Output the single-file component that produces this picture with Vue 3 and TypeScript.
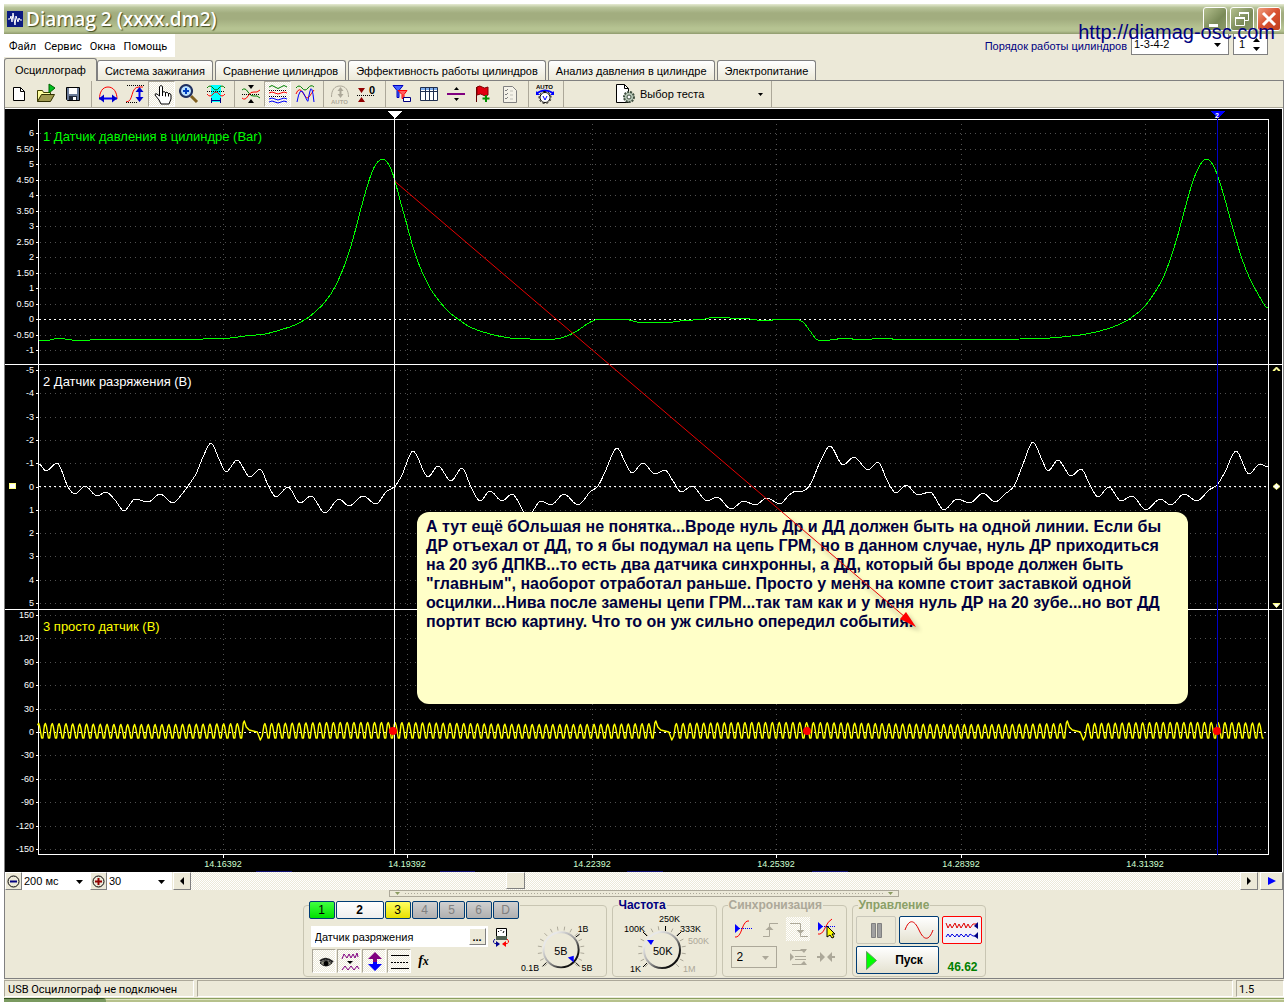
<script setup lang="ts">
import { ref } from 'vue'

interface Shape {
  d?: string
  f?: string
  s?: string
  w?: number
  dash?: string
  t?: string
  x?: number
  y?: number
  size?: number
}
interface Tool {
  label: string
  pressed?: boolean
  shapes: Shape[]
}
type Point = [number, number]

const RED = '#ff0000'
const BLUE = '#0000ff'
const GREEN = '#008000'
const MUTED = '#aca899'

const menu = ['Файл', 'Сервис', 'Окна', 'Помощь']
const tabs = [
  'Осциллограф',
  'Система зажигания',
  'Сравнение цилиндров',
  'Эффективность работы цилиндров',
  'Анализ давления в цилиндре',
  'Электропитание',
]
const activeTab = ref(0)

const toolGroups: Tool[][] = [
  [
    { label: 'Новый', shapes: [{ d: 'M6.5 5.5h7l4 4v9h-11z', f: '#fff', s: '#000' }, { d: 'M13.5 5.5v4h4', s: '#000' }] },
    {
      label: 'Открыть',
      shapes: [
        { d: 'M3.5 19.5v-11h5l1 2h7v3', f: '#ffffa0', s: '#404000' },
        { d: 'M3.5 19.5l4-7h13l-4 7z', f: '#a09a50', s: '#303000' },
        { d: 'M15 2v9l6-5z', f: '#00c020', s: '#006000' },
      ],
    },
    {
      label: 'Сохранить',
      shapes: [
        { d: 'M5.5 5.5h13v13h-12l-1-1z', f: '#6a7a98', s: '#000' },
        { d: 'M8 6h8v6H8z', f: '#fff' },
        { d: 'M8 14h8v4H8z', f: '#20283a' },
        { d: 'M12 15h3v3h-3z', f: '#fff' },
      ],
    },
  ],
  [
    {
      label: 'Ширина',
      shapes: [
        { d: 'M3.5 17c0-7 3-12 8.500-12s9 5 9 12', s: RED },
        { d: 'M3 16.500h18', s: BLUE, w: 2 },
        { d: 'M3 16.500l5-4v8z M21 16.500l-5-4v8z', f: '#0000d0' },
      ],
    },
    {
      label: 'Высота',
      shapes: [
        { d: 'M3 20c8 0 4-15 13-15h4', s: RED },
        { d: 'M4 3.500h17', s: '#000', dash: '1 1' },
        { d: 'M3 20.500h12', s: '#000', dash: '1 1' },
        { d: 'M16.500 8v10', s: BLUE, w: 2 },
        { d: 'M16.500 5l-4 5h8z M16.500 20l-4-5h8z', f: '#0000d0' },
      ],
    },
    {
      label: 'Рука',
      pressed: true,
      shapes: [
        { d: 'M9.500 14V4.500q1.500-2 3 0v6q1.500-2 3 0q1.500-1 3 1q2-.5 2.500 1.500v4l-2 5h-8l-2-4l-4-5q0-2 2-1z', f: '#fff', s: '#000' },
        { d: 'M12.500 10v4M15.500 10.500v4M18.500 11.500v3', s: '#000' },
      ],
    },
    {
      label: 'Масштаб',
      shapes: [
        { d: 'M14 14l6 6', s: '#806020', w: 3 },
        { d: 'M9 3a6 6 0 1 0 .1 0z', f: '#b8e0ff', s: '#203060', w: 2 },
        { d: 'M6 9h6M9 6v6', s: '#0040c0', w: 2 },
      ],
    },
    {
      label: 'Участок',
      shapes: [
        { d: 'M7 3h10v17H7z', f: '#00ffff' },
        { d: 'M3 6q3-4 6 0t6 0t6 0', s: GREEN },
        { d: 'M3 9.500h18', s: '#000', dash: '1 1' },
        { d: 'M3 12q3 4 6 0t6 0t6 0', s: RED },
        { d: 'M7.500 16v5M16.500 16v5M8 18.500h8', s: '#000080' },
      ],
    },
  ],
  [
    {
      label: 'Совместить',
      shapes: [
        { d: 'M9 3h6l-3 4z M9 21h6l-3-4z', f: '#000' },
        { d: 'M3 8q3-3 6 2t6 4t6 2', s: GREEN },
        { d: 'M3 16q3 3 6-2t6-4t6-2', s: RED },
        { d: 'M3 12.500h18', s: '#000', dash: '1 1' },
      ],
    },
    {
      label: 'Раздельно',
      pressed: true,
      shapes: [
        { d: 'M3 5q3-3 6 0t6 0t6 0', s: GREEN },
        { d: 'M3 8.500h18M3 14.500h18', s: '#000', dash: '1 1' },
        { d: 'M3 11q3-2 6 0t6 0t6 0', s: RED },
        { d: 'M3 17q3-2 6 0t6 0t6 0M3 20q3-2 6 0t6 0t6 0', s: BLUE },
      ],
    },
    {
      label: 'Наложить',
      shapes: [
        { d: 'M3 6q3-4 6 0t6 0t6-1', s: GREEN },
        { d: 'M3 12q3-8 7-1t6 4t5-7', s: RED },
        { d: 'M4 20q3-17 7-8t4 7t2-10t4 11', s: BLUE },
      ],
    },
  ],
  [
    {
      label: 'Автомасштаб',
      shapes: [
        { d: 'M3.500 15c0-7 3-11 8.500-11s8.500 4 8.500 11', s: MUTED },
        { d: 'M12.500 7v7', s: MUTED, w: 2 },
        { d: 'M12.500 5l-3 4h6z M12.500 16l-3-4h6z', f: MUTED },
        { t: 'AUTO', x: 3, y: 22, size: 6, f: MUTED },
      ],
    },
    {
      label: 'Ноль',
      shapes: [
        { d: 'M3 6h7l-3.500 5z M3 20h7l-3.500-5z', f: '#900000' },
        { d: 'M2 13.500h18', s: '#000', dash: '1 1' },
        { t: '0', x: 14, y: 12, size: 11, f: '#000' },
      ],
    },
  ],
  [
    {
      label: 'Фильтр',
      shapes: [
        { d: 'M3 3.500h10l-4 5v7h-2v-7z', f: '#4060ff', s: '#0000c0' },
        { d: 'M8 8.500h9l-3 4v4h-2v-4z', f: '#ff6060', s: RED },
        { d: 'M13.500 15.500h7v4h-7z', f: '#fff', s: '#000080' },
      ],
    },
    {
      label: 'Таблица',
      shapes: [
        { d: 'M3.500 5.500h17v13h-17z', f: '#fff', s: '#203050' },
        { d: 'M4 6h16v2H4z', f: '#80b0f0' },
        { d: 'M3 9.500h18M8.500 6v13M12.500 6v13M16.500 6v13', s: '#203050' },
      ],
    },
    {
      label: 'Разделитель',
      shapes: [
        { d: 'M3 12h18', s: '#800080', w: 2 },
        { d: 'M10 8h5l-2.500-3z M10 16h5l-2.500 3z', f: '#000' },
      ],
    },
    {
      label: 'Добавить флаг',
      shapes: [
        { d: 'M5.500 5v15', s: '#600000' },
        { d: 'M6 5q3-2 5 0t6 0v8q-3 2-5 0t-6 0z', f: '#e00010', s: '#800000' },
        { d: 'M15 13v7M11.500 16.500h7', s: '#009000', w: 2 },
      ],
    },
    {
      label: 'Проверки',
      shapes: [
        { d: 'M5.500 4.500h9l4 4v12h-13z', f: '#f4f2e8', s: '#808080' },
        { d: 'M7 8l1 1l2-2M7 12l1 1l2-2M7 16l1 1l2-2', s: '#808080' },
        { d: 'M12 9h3M12 13h3M12 17h3', s: '#c0c0b8' },
      ],
    },
  ],
  [
    {
      label: 'Авто напряжение',
      shapes: [
        { t: 'AUTO', x: 3, y: 7, size: 6, f: '#000' },
        { d: 'M4 11q8-5 16 0', s: BLUE, w: 2 },
        { d: 'M3 9v4h4zM21 9v4h-4z', f: BLUE },
        { d: 'M12 10.500a5 5 0 1 0 .1 0z', f: '#fff', s: '#000', w: 1 },
        { d: 'M12 9.500a6 6 0 1 0 .1 0z', s: '#000', dash: '2 2' },
        { d: 'M10 14l2 4l2-4', s: BLUE },
      ],
    },
  ],
]

const channels = [
  { n: '1', c: 'green' },
  { n: '2', c: 'selected' },
  { n: '3', c: 'yellow' },
  { n: '4', c: 'off' },
  { n: '5', c: 'off' },
  { n: '6', c: 'off' },
  { n: 'D', c: 'off' },
]

const viewTools: Tool[] = [
  {
    label: 'Показать канал',
    pressed: true,
    shapes: [
      { d: 'M7 13q5-5 12 0q-6 6-12 0z', f: '#909080', s: '#202020' },
      { d: 'M13 11a2.500 2.500 0 1 0 .1 0z', f: '#000' },
      { d: 'M7 11q6-5 13 1', s: '#202020', w: 2 },
    ],
  },
  {
    label: 'Сжать сигнал',
    pressed: true,
    shapes: [
      { d: 'M4 9l2-5l3 4l2-4l2 4l2-4l2 4l2-5l1 4', s: '#800080' },
      { d: 'M9 11h6l-3 3z', f: '#000' },
      { d: 'M4 20l3-4l3 4l3-4l3 4l3-4l2 3', s: '#800080' },
    ],
  },
  {
    label: 'Инвертировать',
    pressed: true,
    shapes: [
      { d: 'M12 2l7 7h-5v3h-4V9H5z', f: '#800080' },
      { d: 'M12 21l7-7h-5v-2h-4v2H5z', f: BLUE },
    ],
  },
  { label: 'Линии', pressed: true, shapes: [{ d: 'M3 5.500h18M3 18.500h18', s: '#000' }, { d: 'M3 12.500h18', s: '#000', dash: '2 1' }] },
]

const syncTools: Tool[] = [
  {
    label: 'Синхронизация по уровню',
    shapes: [
      { d: 'M5 20q4 1 7-8t7-8', s: RED },
      { d: 'M5 11.500h17', s: BLUE, dash: '1 1' },
      { d: 'M5 7v9l5-4.500z', f: BLUE },
    ],
  },
  { label: 'По фронту', shapes: [{ d: 'M5 19.500h6.500v-13H20', s: MUTED }, { d: 'M11.500 9l-4 4h8z', f: MUTED }] },
  { label: 'По спаду', pressed: true, shapes: [{ d: 'M4 6.500h10.500v13H22', s: MUTED }, { d: 'M14.500 17l-4-4h8z', f: MUTED }] },
  {
    label: 'Выбор уровня',
    shapes: [
      { d: 'M4 17q4 1 7-6t7-9', s: RED },
      { d: 'M4 9.500h18', s: BLUE, dash: '1 1' },
      { d: 'M4 5v9l5-4.500z', f: BLUE },
      { d: 'M13 9v11l3-2l2 3l2-1l-2-3h3z', f: '#ffff00', s: '#000' },
    ],
  },
]
const syncExtra: Tool[] = [
  { label: 'Уровни', shapes: [{ d: 'M4 8v8l4-4zM14 4h7l-3 4zM14 20h7l-3-4z', f: MUTED }, { d: 'M6 5.500h14M9 11.500h11M9 14.500h11M6 19.500h14', s: MUTED }] },
  { label: 'Сблизить', shapes: [{ d: 'M3 12h7M14 12h7', s: MUTED, w: 2 }, { d: 'M6 7v10l5-5zM18 7v10l-5-5z', f: MUTED }] },
]

/* Chart geometry */
const pressureTicks = ['6', '5.50', '5', '4.50', '4', '3.50', '3', '2.50', '2', '1.50', '1', '0.50', '0', '-0.50', '-1'].map(
  (t, i) => ({ t, y: Math.round(133 + i * 15.5) }),
)
const vacuumTicks = ['-5', '-4', '-3', '-2', '-1', '0', '1', '2', '3', '4', '5'].map((t, i) => ({
  t,
  y: Math.round(370 + i * 23.3),
}))
const crankTicks = ['150', '120', '90', '60', '30', '0', '-30', '-60', '-90', '-120', '-150'].map((t, i) => ({
  t,
  y: Math.round(615 + i * 23.4),
}))
const ticks = [...pressureTicks, ...vacuumTicks, ...crankTicks]
const timeTicks = ['14.16392', '14.19392', '14.22392', '14.25392', '14.28392', '14.31392'].map((t, i) => ({
  t,
  x: Math.round(223 + i * 184.4),
}))

const pressure: Point[] = [
  [39, 340], [50, 340], [58, 338], [72, 340], [90, 340], [120, 339], [143, 340], [160, 339], [203, 339], [230, 338], [245, 336],
  [265, 334], [280, 330], [295, 325], [306, 319], [315, 312], [325, 302], [335, 287], [345, 264], [353, 239], [360, 212],
  [367, 187], [372, 172], [376, 164], [380, 160], [383, 159], [387, 162], [391, 169], [395, 181], [400, 200], [407, 225],
  [413, 247], [420, 267], [430, 288], [440, 302], [450, 313], [458, 319], [470, 327], [490, 334], [510, 338], [530, 339],
  [555, 339], [567, 336], [577, 331], [587, 324], [595, 320], [602, 319], [625, 319], [637, 322], [652, 322], [665, 323],
  [680, 321], [705, 319], [714, 317], [730, 318], [750, 319], [765, 321], [780, 319], [795, 319], [803, 322], [810, 331],
  [818, 340], [830, 340], [845, 338], [860, 340], [885, 338], [900, 340], [1020, 339], [1050, 338], [1080, 335], [1100, 331],
  [1118, 325], [1131, 318], [1145, 306], [1155, 292], [1163, 278], [1170, 260], [1177, 238], [1183, 216], [1189, 194],
  [1194, 178], [1199, 167], [1203, 161], [1207, 159], [1211, 162], [1215, 169], [1218, 177], [1224, 196], [1230, 218],
  [1236, 239], [1242, 259], [1250, 279], [1258, 294], [1268, 308],
]
const vacuum: Point[] = [
  [39, 464], [46, 471], [57, 463], [68, 487], [75, 494], [85, 486], [97, 496], [106, 492], [115, 500], [124, 511], [135, 499],
  [148, 502], [160, 494], [173, 503], [182, 494], [188, 486], [196, 474], [203, 457], [211, 443], [219, 459], [226, 472],
  [237, 460], [250, 477], [260, 469], [268, 485], [276, 497], [288, 487], [300, 503], [311, 496], [325, 513], [339, 499],
  [349, 506], [363, 496], [376, 504], [386, 492], [395, 486], [402, 475], [413, 451], [428, 477], [438, 466], [451, 481],
  [462, 468], [471, 487], [480, 501], [490, 491], [502, 501], [512, 494], [528, 516], [541, 501], [551, 505], [564, 494],
  [578, 505], [590, 492], [598, 486], [605, 472], [617, 448], [626, 464], [632, 473], [643, 463], [655, 474], [665, 470],
  [673, 481], [681, 492], [692, 486], [707, 501], [717, 497], [731, 509], [744, 501], [755, 505], [767, 498], [780, 504],
  [789, 495], [797, 491], [803, 491], [811, 483], [820, 462], [830, 446], [843, 465], [854, 457], [868, 470], [878, 462],
  [887, 480], [896, 493], [906, 485], [918, 495], [930, 492], [944, 510], [957, 499], [970, 503], [983, 493], [995, 502],
  [1005, 494], [1014, 486], [1022, 467], [1033, 442], [1042, 460], [1048, 471], [1058, 460], [1071, 476], [1081, 469],
  [1090, 485], [1098, 497], [1109, 487], [1121, 501], [1132, 496], [1146, 510], [1160, 499], [1171, 505], [1184, 494],
  [1197, 501], [1209, 490], [1217, 485], [1225, 472], [1236, 451], [1249, 474], [1260, 464], [1268, 467],
]

function smooth(points: Point[]): string {
  const slope = (p: Point, q: Point, r: Point): number =>
    (q[1] - p[1]) * (r[1] - q[1]) <= 0 ? 0 : (r[1] - p[1]) / (r[0] - p[0])
  let d = `M${points[0][0]} ${points[0][1]}`
  for (let i = 0; i < points.length - 1; i++) {
    const a = points[Math.max(i - 1, 0)]
    const b = points[i]
    const c = points[i + 1]
    const e = points[Math.min(i + 2, points.length - 1)]
    const t = (c[0] - b[0]) / 3
    d += `C${b[0] + t} ${b[1] + slope(a, b, c) * t} ${c[0] - t} ${c[1] - slope(b, c, e) * t} ${c[0]} ${c[1]}`
  }
  return d
}

/* Toothed wheel signal: 58 teeth, then a gap of two */
function crankPath(): string {
  const pitch = 411.5 / 60
  const out: string[] = []
  for (let rev = 0; rev < 4; rev++) {
    const gap = 244.3 + rev * 411.5
    for (let k = 57; k >= 0; k--) {
      const x = gap - k * pitch
      if (x < 38 || x > 1265) continue
      const top = k === 0 ? 721 : 723.5 + Math.sin(k / 9)
      out.push(`${(x - 1).toFixed(1)} ${top + 2}`, `${x.toFixed(1)} ${top}`)
      if (k === 0) {
        out.push(`${x + 2} 727`, `${x + 5} 730`, `${x + 13} 732`, `${x + 16} 740`, `${x + 18} 736`)
      } else {
        out.push(`${(x + 1).toFixed(1)} ${top + 3}`, `${(x + 3).toFixed(1)} 738`, `${(x + 4.3).toFixed(1)} 738`)
      }
    }
  }
  return 'M' + out.join('L')
}

const note = [
  'А тут ещё бОльшая не понятка...Вроде нуль Др и ДД должен быть на одной линии. Если бы',
  'ДР отъехал от ДД, то я бы подумал на цепь ГРМ, но в данном случае, нуль ДР приходиться',
  'на 20 зуб ДПКВ...то есть два датчика синхронны, а ДД, который бы вроде должен быть',
  '"главным", наоборот отработал раньше. Просто у меня на компе стоит заставкой одной',
  'осцилки...Нива после замены цепи ГРМ...так там как и у меня нуль ДР на 20 зубе...но вот ДД',
  'портит всю картину. Что то он уж сильно опередил события.',
]

function knobTicks(cx: number, cy: number): string {
  let d = ''
  for (let a = -225; a <= 45; a += 18) {
    const r = (a * Math.PI) / 180
    d += `M${cx + 20 * Math.cos(r)} ${cy + 20 * Math.sin(r)}L${cx + 24 * Math.cos(r)} ${cy + 24 * Math.sin(r)}`
  }
  return d
}
</script>

<template>
  <div class="window">
    <header class="titlebar">
      <svg class="logo" viewBox="0 0 16 16" aria-hidden="true">
        <rect width="16" height="16" fill="#0a1a80" />
        <path d="M1 8h2l1-3l1 6l1-9l2 12l1-9l2 6l1-4l1 2h2" fill="none" stroke="#fff" />
      </svg>
      <h1>Diamag 2 (xxxx.dm2)</h1>
      <div class="win-buttons">
        <button type="button" aria-label="Свернуть"><svg viewBox="0 0 22 22"><path d="M5 16h9v3H5z" fill="#fff" /></svg></button>
        <button type="button" aria-label="Восстановить">
          <svg viewBox="0 0 22 22"><path d="M8.500 8V4.500h9v8H14M4.500 10.500h9v7h-9z" fill="none" stroke="#fff" /><path d="M8 4h10v2H8zM4 9h10v2H4z" fill="#fff" /></svg>
        </button>
        <button type="button" class="close" aria-label="Закрыть">
          <svg viewBox="0 0 22 22"><path d="M5 5l12 12M17 5L5 17" stroke="#fff" stroke-width="3" /></svg>
        </button>
      </div>
    </header>
    <a class="watermark" href="http://diamag-osc.com">http://diamag-osc.com</a>

    <div class="menu-row">
      <nav class="menu"><button v-for="m in menu" :key="m" type="button">{{ m }}</button></nav>
      <div class="order">
        <label for="order">Порядок работы цилиндров</label>
        <span class="combo order-combo">
          <select id="order"><option>1-3-4-2</option></select>
          <svg class="caret" viewBox="0 0 7 4"><path d="M0 0h7L3.500 4z" /></svg>
        </span>
        <span class="spin">
          <input type="text" value="1" aria-label="Цилиндр" />
          <span class="spin-arrows">
            <button type="button" aria-label="Больше"><svg viewBox="0 0 7 4"><path d="M0 4h7L3.500 0z" /></svg></button>
            <button type="button" aria-label="Меньше"><svg viewBox="0 0 7 4"><path d="M0 0h7L3.500 4z" /></svg></button>
          </span>
        </span>
      </div>
    </div>

    <div class="tabs" role="tablist">
      <button
        v-for="(t, i) in tabs"
        :key="t"
        type="button"
        role="tab"
        :aria-selected="i === activeTab"
        :class="{ active: i === activeTab }"
        @click="activeTab = i"
      >{{ t }}</button>
    </div>

    <main class="content">
      <div class="toolbar">
        <div v-for="(g, gi) in toolGroups" :key="gi" class="tool-group">
          <button v-for="b in g" :key="b.label" type="button" class="tool" :class="{ pressed: b.pressed }" :aria-label="b.label">
            <svg viewBox="0 0 24 24">
              <template v-for="(p, i) in b.shapes" :key="i">
                <text v-if="p.t" :x="p.x" :y="p.y" :font-size="p.size" :fill="p.f" font-weight="bold">{{ p.t }}</text>
                <path v-else :d="p.d" :fill="p.f || 'none'" :stroke="p.s || 'none'" :stroke-width="p.w || 1" :stroke-dasharray="p.dash" />
              </template>
            </svg>
          </button>
        </div>
        <button type="button" class="test-pick">
          <svg class="test-icon" viewBox="0 0 20 20">
            <path d="M.5.5h8l4 4v14H.5z" fill="#fff" stroke="#000" />
            <path d="M8.500.5v4h4" fill="none" stroke="#000" />
            <circle cx="13" cy="13" r="5" fill="#b8c8b8" stroke="#405040" stroke-width="2" stroke-dasharray="2 1" />
            <circle cx="13" cy="13" r="2" fill="#fff" stroke="#405040" />
          </svg>
          <span>Выбор теста</span>
          <svg class="small-caret" viewBox="0 0 5 3"><path d="M0 0h5L2.500 3z" /></svg>
        </button>
      </div>

      <svg class="chart" viewBox="5 109 1278 763" role="img" aria-label="Осциллограмма">
        <rect x="5" y="109" width="1277" height="763" fill="#000" />
        <rect x="1282" y="109" width="1" height="763" fill="#fff" />
        <g shape-rendering="crispEdges" fill="none">
          <path v-for="(t, i) in ticks" :key="'g' + i" :d="`M40 ${t.y + 0.5}H1267`" stroke="#505050" stroke-dasharray="1 4" />
          <path v-for="t in timeTicks" :key="t.t" :d="`M${t.x + 0.5} 124V855`" stroke="#505050" stroke-dasharray="1 4" />
          <path v-for="(t, i) in ticks" :key="'t' + i" :d="`M36 ${t.y + 0.5}H39`" stroke="#fff" />
          <path v-for="t in timeTicks" :key="'x' + t.t" :d="`M${t.x + 0.5} 855v3`" stroke="#fff" />
          <path d="M39 319.500H1268M39 486.500H1268M39 732.500H1268" stroke="#fff" stroke-dasharray="2 3" />
          <path :d="smooth(pressure)" stroke="#00ff00" />
          <path :d="smooth(vacuum)" stroke="#fff" />
          <path d="M5 364.500H1282M5 609.500H1282M38.500 119.500H1268.500V854.500H38.500z" stroke="#fff" />
        </g>
        <path :d="crankPath()" fill="none" stroke="#ffff00" stroke-width="1.400" stroke-linejoin="round" />
        <g shape-rendering="crispEdges">
          <path d="M394.500 118V855" stroke="#fff" />
          <path d="M387 111h15l-7 8z" fill="#fff" />
          <path d="M1217.500 118V855" stroke="#0000c8" />
          <path d="M1210 111h15l-7 8z" fill="#0000ff" />
        </g>
        <text x="1215" y="118" font-size="7" fill="#fff" font-weight="bold">2</text>
        <circle v-for="x in [393, 807, 1217]" :key="x" :cx="x" cy="731" r="4" fill="#ff0000" />
        <g class="scale">
          <text v-for="(t, i) in ticks" :key="'l' + i" x="34" :y="t.y + 3" text-anchor="end">{{ t.t }}</text>
          <text v-for="t in timeTicks" :key="'n' + t.t" :x="t.x" y="867" text-anchor="middle" fill="#d0ffd0">{{ t.t }}</text>
        </g>
        <g font-size="13">
          <text x="43" y="141" fill="#00ff00">1 Датчик давления в цилиндре (Bar)</text>
          <text x="43" y="386" fill="#fff">2 Датчик разряжения (В)</text>
          <text x="43" y="631" fill="#ffff00">3 просто датчик (В)</text>
        </g>
        <g fill="#fff" stroke="#ffff80">
          <rect x="9.500" y="483.500" width="6" height="5" />
          <path d="M1273 370.500h2l1.500-2l1.500 2h2l-3.500-3.500z" />
          <path d="M1273 486.500l3.500-3l3.500 3l-3.500 3z" />
          <path d="M1273 603.500h7l-3.500 4z" />
        </g>
        <rect x="417" y="512" width="771" height="192" rx="12" fill="#ffffc8" />
        <text class="note" x="426" y="532"><tspan v-for="(l, i) in note" :key="i" x="426" :y="532 + i * 19">{{ l }}</tspan></text>
        <path class="arrow-shadow" d="M790 520L905 620M918 629L903 624L908 616z" fill="#000" stroke="#000" stroke-width="2" />
        <path d="M395 181.500L905 617" stroke="#e80000" fill="none" />
        <path d="M916 627L900 619L906 612z" fill="#ff0000" />
        <path d="M256 871.500h36M440 871.500h35M627 871.500h36M812 871.500h36" stroke="#101070" />
      </svg>

      <div class="scroll-row">
        <button type="button" class="raised zoom-btn" aria-label="Уменьшить">
          <svg viewBox="0 0 13 13"><circle cx="6.500" cy="6.500" r="5.500" fill="none" stroke="#000" /><path d="M3 6.500h7" stroke="#000080" stroke-width="2" /></svg>
        </button>
        <span class="combo time-combo">
          <select aria-label="Развёртка"><option>200 мс</option></select>
          <svg class="caret" viewBox="0 0 7 4"><path d="M0 0h7L3.500 4z" /></svg>
        </span>
        <button type="button" class="raised zoom-btn" aria-label="Увеличить">
          <svg viewBox="0 0 13 13"><circle cx="6.500" cy="6.500" r="5.500" fill="none" stroke="#000" /><path d="M3 6.500h7M6.500 3v7" stroke="#900000" stroke-width="2" /></svg>
        </button>
        <span class="combo step-combo">
          <select aria-label="Шаг"><option>30</option></select>
          <svg class="caret" viewBox="0 0 7 4"><path d="M0 0h7L3.500 4z" /></svg>
        </span>
        <button type="button" class="raised arrow-btn" aria-label="Назад"><svg viewBox="0 0 4 8"><path d="M4 0v8L0 4z" /></svg></button>
        <div class="track"><div class="thumb raised"></div></div>
        <button type="button" class="raised arrow-btn" aria-label="Вперёд"><svg viewBox="0 0 4 8"><path d="M0 0v8l4-4z" /></svg></button>
        <button type="button" class="raised play-btn" aria-label="Воспроизвести"><svg viewBox="0 0 8 8"><path d="M0 0v8l8-4z" fill="#0000ff" /></svg></button>
      </div>

      <div class="splitter">
        <svg viewBox="0 0 5 3"><path d="M0 0h5L2.500 3z" /></svg>
        <span></span>
        <svg viewBox="0 0 5 3"><path d="M0 0h5L2.500 3z" /></svg>
      </div>

      <section class="panel">
        <div class="group channel-group">
          <div class="channel-left">
            <div class="channels"><button v-for="c in channels" :key="c.n" type="button" :class="c.c">{{ c.n }}</button></div>
            <div class="sensor-row">
              <div class="sensor">
                <input type="text" value="Датчик разряжения" aria-label="Датчик" />
                <button type="button" class="raised" aria-label="Выбрать датчик">...</button>
              </div>
              <svg class="device" viewBox="0 0 18 20">
                <path d="M4.500 1.500h10v9h-10z" fill="#fff" stroke="#000" />
                <path d="M4 9h11v4H4z" fill="#506050" />
                <path d="M6 4l1 1M9 3v1M12 4l-1 2" stroke="#000" />
                <path d="M3 12q-4 4 2 5" fill="none" stroke="#000090" />
                <path d="M4 14l4 3l-4 3z" fill="#000090" />
                <path d="M15 12q4 4-2 5" fill="none" stroke="#ff0000" />
                <path d="M14 14l-4 3l4 3z" fill="#ff0000" />
              </svg>
            </div>
            <div class="view-tools">
              <button v-for="b in viewTools" :key="b.label" type="button" class="icon-btn pressed" :aria-label="b.label">
                <svg viewBox="0 0 24 24">
                  <path v-for="(p, i) in b.shapes" :key="i" :d="p.d" :fill="p.f || 'none'" :stroke="p.s || 'none'" :stroke-width="p.w || 1" :stroke-dasharray="p.dash" />
                </svg>
              </button>
              <button type="button" class="icon-btn fx">f<small>x</small></button>
            </div>
          </div>
          <svg class="knob-channel" viewBox="516 906 88 70">
            <defs>
              <linearGradient id="rim" x1="0" y1="0" x2="1" y2="1">
                <stop offset="0.200" stop-color="#e8e8e8" />
                <stop offset="0.500" stop-color="#a0a0a0" />
                <stop offset="0.800" stop-color="#101010" />
              </linearGradient>
            </defs>
            <path :d="knobTicks(558, 950)" stroke="#aca899" />
            <path d="M573 937l4-3M573 963l4 4M543 963l-4 4" stroke="#000" />
            <circle cx="558" cy="950" r="18" fill="#ece9d8" stroke="url(#rim)" stroke-width="2" />
            <path d="M565 958l6-2v7z" fill="#0000ff" />
            <text x="551" y="955" font-size="11">5В</text>
            <text x="575" y="932">1В</text>
            <text x="579" y="972">5В</text>
            <text x="517" y="972">0.1В</text>
          </svg>
        </div>

        <fieldset class="group freq-group">
          <legend class="navy">Частота</legend>
          <svg viewBox="612 912 103 64">
            <path :d="knobTicks(661, 950)" stroke="#aca899" />
            <path d="M664.500 931v-5M676 936l4-4M646 936l-4-4M646 963l-4 4" stroke="#000" />
            <circle cx="661" cy="950" r="18" fill="#ece9d8" stroke="url(#rim)" stroke-width="2" />
            <path d="M646 940h7l-3 5z" fill="#0000ff" />
            <text x="652" y="955" font-size="11">50K</text>
            <text x="623" y="932">100K</text>
            <text x="658" y="922">250K</text>
            <text x="679" y="932">333K</text>
            <text x="687" y="944" fill="#aca899">500K</text>
            <text x="629" y="972">1K</text>
            <text x="682" y="972" fill="#aca899">1M</text>
          </svg>
        </fieldset>

        <fieldset class="group sync-group">
          <legend class="muted">Синхронизация</legend>
          <div class="sync-row">
            <button v-for="b in syncTools" :key="b.label" type="button" class="icon-btn flat" :class="{ checker: b.pressed }" :aria-label="b.label">
              <svg viewBox="0 0 24 24">
                <path v-for="(p, i) in b.shapes" :key="i" :d="p.d" :fill="p.f || 'none'" :stroke="p.s || 'none'" :stroke-width="p.w || 1" :stroke-dasharray="p.dash" />
              </svg>
            </button>
          </div>
          <div class="sync-row second">
            <span class="combo sync-combo">
              <select aria-label="Канал синхронизации"><option>2</option></select>
              <svg class="caret" viewBox="0 0 7 4"><path d="M0 0h7L3.500 4z" fill="#aca899" /></svg>
            </span>
            <button v-for="b in syncExtra" :key="b.label" type="button" class="icon-btn flat" :aria-label="b.label">
              <svg viewBox="0 0 24 24">
                <path v-for="(p, i) in b.shapes" :key="i" :d="p.d" :fill="p.f || 'none'" :stroke="p.s || 'none'" :stroke-width="p.w || 1" />
              </svg>
            </button>
          </div>
        </fieldset>

        <fieldset class="group run-group">
          <legend class="olive">Управление</legend>
          <div class="run-row">
            <button type="button" class="xp disabled" aria-label="Пауза">
              <svg viewBox="0 0 36 24"><path d="M13.500 5.500h4v14h-4zM19.500 5.500h4v14h-4z" fill="#a0a0a0" stroke="#808080" /></svg>
            </button>
            <button type="button" class="xp" aria-label="Один канал">
              <svg viewBox="0 0 36 24"><path d="M4 12C8 1 13 1 18 12s10 11 14 0" fill="none" stroke="#e00000" /></svg>
            </button>
            <button type="button" class="xp red" aria-label="Все каналы">
              <svg viewBox="0 0 36 24">
                <path d="M2 5l2 5l2-4l2 4l3-5l2 5l2-4l2 4l3-5l2 5l2-4l2 4l3-4h4" fill="none" stroke="#e00000" />
                <path d="M2 19l2-3l2 3l2-3l3 3l2-3l2 3l2-3l3 3l2-3l2 3l2-3l3 2h4" fill="none" stroke="#0000e0" />
                <path d="M34 4v7l-4-3zM34 14v7l-4-3z" fill="#000080" />
              </svg>
            </button>
          </div>
          <div class="run-row lower">
            <button type="button" class="xp start">
              <svg viewBox="0 0 11 19"><path d="M.5.5v18l10-9z" fill="#00ff00" stroke="#60a060" /></svg>
              <span>Пуск</span>
            </button>
            <output>46.62</output>
          </div>
        </fieldset>
      </section>
    </main>

    <footer class="status">
      <span class="cell first">USB Осциллограф не подключен</span>
      <span class="cell middle"></span>
      <span class="cell last">1.5</span>
    </footer>
    <div class="taskbar"><span></span></div>
  </div>
</template>

<style>
body {
  margin: 0;
  background: #fff;
}
</style>

<style scoped>
.window {
  position: relative;
  margin: 4px 4px 0;
  background: #ece9d8;
  font: 11px/14px "Liberation Sans", Arial, sans-serif;
  color: #000;
}
button,
input,
select {
  box-sizing: border-box;
  margin: 0;
  padding: 0;
  border: 0;
  border-radius: 0;
  background: transparent;
  color: inherit;
  font: inherit;
}
svg {
  display: block;
}
.titlebar {
  display: flex;
  align-items: center;
  height: 30px;
  padding: 0 3px;
  box-sizing: border-box;
  background: linear-gradient(#e6ebd3, #b8c49a 12%, #a2ad7f 30%, #a2ad7f 50%, #b6c392 80%, #b6c392 90%, #8f9a6d);
}
.logo {
  width: 16px;
  height: 16px;
}
h1 {
  flex: 1;
  margin: 0 0 0 3px;
  font: 600 19px/28px "Open Sans", "Noto Sans", sans-serif;
  color: #fff;
  text-shadow: 1px 1px 1px #404a20;
}
.win-buttons {
  display: flex;
  gap: 3px;
}
.win-buttons button {
  width: 24px;
  height: 24px;
  border: 1px solid #fff;
  border-radius: 3px;
  background: linear-gradient(135deg, #b4c08e, #7a8a58 60%, #8d9c6a);
}
.win-buttons .close {
  background: linear-gradient(135deg, #f0a080, #d85030 50%, #c04020);
}
.watermark {
  position: absolute;
  z-index: 2;
  top: 17px;
  right: 9px;
  font-size: 20px;
  line-height: 22px;
  color: #000080;
  text-decoration: none;
}
.menu-row {
  display: flex;
  justify-content: space-between;
  height: 24px;
}
.menu {
  display: flex;
  align-items: center;
  gap: 8px;
  padding: 2px 8px 0 5px;
  height: 21px;
  background: #fff;
  font-family: Roboto, sans-serif;
}
.order {
  display: flex;
  align-items: flex-start;
  gap: 4px;
  padding-right: 16px;
}
.order label {
  line-height: 24px;
  color: #000080;
}
.combo {
  position: relative;
  display: block;
  background: #fff;
}
.combo select {
  display: block;
  width: 100%;
  height: 100%;
  padding-left: 2px;
  appearance: none;
}
.caret {
  position: absolute;
  top: 50%;
  right: 7px;
  width: 7px;
  height: 4px;
  margin-top: -1px;
  pointer-events: none;
}
.order-combo,
.spin {
  height: 21px;
  box-sizing: border-box;
  border: 1px solid #808080;
  border-top: 0;
  background: #fff;
}
.order-combo {
  width: 98px;
}
.spin {
  display: flex;
  width: 35px;
}
.spin input {
  width: 19px;
  padding-left: 5px;
}
.spin-arrows {
  display: flex;
  flex-direction: column;
  justify-content: center;
  gap: 5px;
}
.spin-arrows svg {
  width: 7px;
  height: 4px;
}
.tabs {
  display: flex;
  align-items: flex-end;
  gap: 2px;
  height: 22px;
}
.tabs button {
  height: 20px;
  padding: 0 7px;
  border: 1px solid #808080;
  border-bottom: 0;
  border-radius: 3px 3px 0 0;
  background: linear-gradient(#fff, #ece9d8);
}
.tabs button.active {
  position: relative;
  height: 23px;
  margin: 0 -2px -1px 0;
  padding: 0 10px;
  background: #ece9d8;
}
.content {
  border: 1px solid #808080;
}
.toolbar {
  display: flex;
  height: 26px;
  border-bottom: 1px solid #aca899;
  box-shadow: 0 1px #fff;
  margin-bottom: 1px;
}
.tool-group {
  display: flex;
  padding-right: 5px;
  margin-right: 2px;
  border-right: 1px solid #aca899;
}
.tool {
  display: grid;
  place-items: center;
  width: 27px;
  height: 26px;
}
.tool svg,
.icon-btn svg {
  width: 24px;
  height: 24px;
}
.pressed {
  border: 1px solid;
  border-color: #aca899 #fff #fff #aca899;
}
.pressed,
.checker,
.track {
  background: repeating-conic-gradient(#fff 0 25%, #ece9d8 0 50%) 0 0 / 2px 2px;
}
.test-pick {
  display: flex;
  align-items: center;
  width: 206px;
  padding: 0 8px 0 50px;
  border-right: 1px solid #aca899;
}
.test-icon {
  width: 20px;
  height: 20px;
}
.test-pick span {
  flex: 1;
  padding-left: 4px;
  text-align: left;
}
.small-caret {
  width: 5px;
  height: 3px;
}
.chart {
  width: 100%;
  height: auto;
}
.scale {
  font-size: 9px;
  fill: #fff;
}
.note {
  font-size: 16px;
  font-weight: 700;
  fill: #000040;
}
.arrow-shadow {
  opacity: 0.2;
  filter: blur(2px);
}
.scroll-row {
  display: flex;
  height: 18px;
}
.raised {
  border: 1px solid;
  border-color: #fff #808080 #808080 #fff;
  background: #ece9d8;
}
.scroll-row > button {
  display: grid;
  place-items: center;
}
.zoom-btn {
  width: 17px;
}
.zoom-btn svg {
  width: 13px;
  height: 13px;
}
.time-combo {
  width: 68px;
}
.step-combo {
  width: 65px;
  margin-right: 1px;
}
.arrow-btn {
  width: 18px;
}
.arrow-btn svg {
  width: 4px;
  height: 8px;
}
.track {
  flex: 1;
}
.thumb {
  box-sizing: border-box;
  width: 19px;
  height: 17px;
  margin-left: 30%;
}
.play-btn {
  width: 23px;
  margin-left: 2px;
}
.play-btn svg {
  width: 8px;
  height: 8px;
}
.splitter {
  display: flex;
  align-items: center;
  gap: 5px;
  width: 510px;
  height: 7px;
  box-sizing: border-box;
  margin: 0 auto;
  padding: 0 5px;
  border: 1px solid #aca899;
  fill: #8a9a60;
}
.splitter svg {
  width: 5px;
  height: 3px;
}
.splitter span {
  flex: 1;
  height: 1px;
  background: repeating-linear-gradient(90deg, #aca899 0 1px, transparent 1px 3px);
}
.panel {
  display: flex;
  justify-content: center;
  align-items: flex-end;
  gap: 5px;
  height: 80px;
  padding-bottom: 1px;
}
.group {
  box-sizing: border-box;
  min-width: 0;
  margin: 0;
  padding: 0;
  border: 1px solid #c8c5b2;
  border-radius: 4px;
}
fieldset.group {
  height: 79px;
}
legend {
  margin-left: 5px;
  padding: 0 1px;
  font: 700 12px/14px "Liberation Sans", Arial, sans-serif;
}
.navy {
  color: #000080;
}
.muted {
  color: #aca899;
}
.olive {
  color: #8a9f67;
}
.channel-group {
  display: flex;
  width: 304px;
  height: 72px;
}
.channel-left {
  width: 212px;
  padding-left: 5px;
}
.channels {
  display: flex;
  gap: 1px;
  height: 18px;
  margin-top: -5px;
  padding-right: 1px;
  background: #ece9d8;
}
.channels button {
  width: 26px;
  border: 1px solid #003c74;
  border-radius: 2px;
  font-size: 12px;
}
.channels .green {
  background: linear-gradient(#40ff40, #00e000);
}
.channels .selected {
  width: 48px;
  background: linear-gradient(#fff, #eee);
  font-weight: 700;
}
.channels .yellow {
  background: linear-gradient(#ffff60, #e8e000);
}
.channels .off {
  background: linear-gradient(#d0d0d0, #b0b0b0);
  color: #808080;
}
.sensor-row {
  display: flex;
  align-items: center;
  gap: 4px;
  margin: 7px 0 2px 2px;
}
.sensor {
  display: flex;
  align-items: center;
  width: 177px;
  height: 21px;
  box-sizing: border-box;
  padding-right: 2px;
  background: #fff;
}
.sensor input {
  flex: 1;
  min-width: 0;
  padding-left: 4px;
}
.sensor button {
  width: 17px;
  height: 17px;
  font-weight: 700;
  line-height: 8px;
}
.device {
  width: 18px;
  height: 20px;
}
.view-tools {
  display: flex;
  gap: 1px;
  margin-left: 3px;
}
.icon-btn {
  display: grid;
  place-items: center;
  width: 24px;
  height: 24px;
  overflow: hidden;
}
.fx {
  display: block;
  font: italic 700 14px/20px "Liberation Serif", serif;
}
.fx small {
  font-size: 12px;
}
.knob-channel {
  width: 88px;
  height: 70px;
  font-size: 9px;
}
.freq-group {
  width: 105px;
}
.freq-group svg {
  width: 103px;
  height: 64px;
  font-size: 9px;
}
.sync-group {
  width: 125px;
}
.sync-row {
  display: flex;
  gap: 4px;
  padding: 5px 7px 0;
}
.sync-row.second {
  padding: 4px 8px 0;
}
.flat.checker {
  border: 0;
}
.sync-combo {
  width: 47px;
  height: 22px;
  box-sizing: border-box;
  margin: 1px 5px 0 0;
  border: 1px solid #aca899;
  background: #ece9d8;
}
.sync-combo select {
  padding-left: 5px;
  font-size: 12px;
}
.run-group {
  width: 134px;
}
.run-row {
  display: flex;
  gap: 3px;
  padding: 4px 3px 0;
}
.run-row.lower {
  padding-top: 2px;
}
.xp {
  display: grid;
  place-items: center;
  width: 40px;
  height: 28px;
  border: 1px solid #003c74;
  border-radius: 2px;
  background: linear-gradient(#fff, #e4e1d0);
}
.xp.disabled {
  border-color: #c9c7ba;
  background: #ece9d8;
}
.xp.red {
  border-color: #ff0000;
  background: #f4f2f8;
}
.xp svg {
  width: 36px;
  height: 24px;
}
.xp.start {
  display: flex;
  align-items: center;
  width: 83px;
  padding-left: 9px;
  font-size: 12px;
  font-weight: 700;
}
.xp.start svg {
  width: 11px;
  height: 19px;
}
.xp.start span {
  flex: 1;
  padding-left: 4px;
}
output {
  align-self: flex-end;
  padding-left: 6px;
  font-size: 12px;
  font-weight: 700;
  color: #008000;
}
.status {
  display: flex;
  gap: 3px;
  height: 19px;
  padding-top: 1px;
  box-sizing: border-box;
  font-family: Roboto, sans-serif;
}
.cell {
  box-sizing: border-box;
  height: 17px;
  border: 1px solid;
  border-color: #aca899 #fff #fff #aca899;
  padding-left: 3px;
  line-height: 17px;
}
.first {
  width: 190px;
}
.middle {
  flex: 1;
}
.last {
  width: 48px;
  padding-left: 2px;
}
.taskbar {
  height: 4px;
  background: linear-gradient(#8aa060 0 1px, #dfe6c0 1px 2px, #b6c18c 2px);
}
.taskbar span {
  display: block;
  width: 102px;
  height: 4px;
  border-radius: 0 3px 0 0;
  background: linear-gradient(#305020 0 1px, #7a9a60 1px);
}
</style>
